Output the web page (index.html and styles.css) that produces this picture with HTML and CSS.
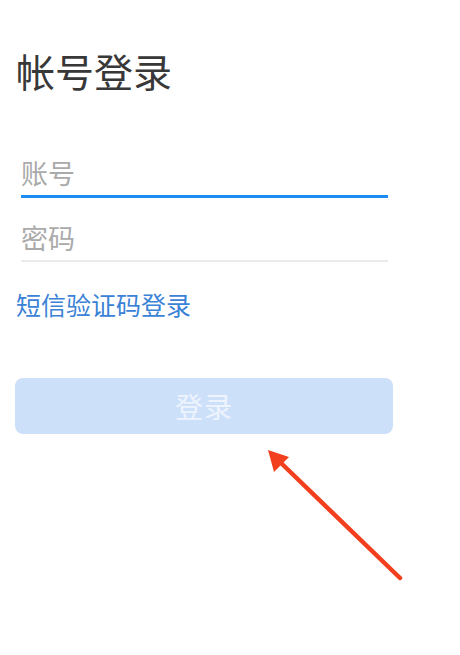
FILE: index.html
```html
<!DOCTYPE html>
<html lang="zh">
<head>
<meta charset="utf-8">
<title>帐号登录</title>
<link rel="stylesheet" href="styles.css">
</head>
<body>
<div class="page">
  <h1 class="title">帐号登录</h1>
  <form class="form">
    <div class="field field-active">
      <input class="input" type="text" placeholder="账号">
    </div>
    <div class="field">
      <input class="input" type="password" placeholder="密码">
    </div>
    <a class="sms-link" href="#">短信验证码登录</a>
    <button class="submit" type="button" disabled>登录</button>
  </form>
  <svg class="annotation" width="460" height="655" viewBox="0 0 460 655">
    <line x1="400" y1="578" x2="280" y2="462" stroke="#f2401f" stroke-width="4.5" stroke-linecap="round"/>
    <polygon points="268,450 289,457 274,472" fill="#f2401f"/>
  </svg>
</div>
</body>
</html>
```
FILE: styles.css
```css
* { box-sizing: border-box; }
html, body {
  margin: 0;
  padding: 0;
  background: #ffffff;
}
body {
  font-family: "Noto Sans CJK SC", "Noto Sans", sans-serif;
  width: 460px;
  height: 655px;
  overflow: hidden;
}
.page {
  position: relative;
  width: 460px;
  height: 655px;
  padding: 0 72px 0 16px;
}
.title {
  margin: 0;
  padding-top: 44px;
  font-size: 39px;
  line-height: 52px;
  font-weight: 400;
  color: #383838;
  letter-spacing: 0;
}
.form {
  display: flex;
  flex-direction: column;
  margin-top: 45px;
}
.field {
  margin-left: 5px;
  border-bottom: 2px solid #ebebeb;
  height: 56px;
  display: flex;
  align-items: flex-end;
}
.field-active {
  border-bottom: 3px solid #1a8cf2;
  height: 57px;
}
.field + .field { margin-top: 8px; }
.input {
  border: 0;
  outline: none;
  padding: 0 0 3px 0;
  width: 100%;
  font-family: inherit;
  font-size: 27px;
  line-height: 38px;
  color: #333;
  background: transparent;
}
.input::placeholder { color: #aaaaaa; }
.sms-link {
  margin-top: 24px;
  font-size: 25px;
  line-height: 36px;
  color: #3a82d6;
  text-decoration: none;
  align-self: flex-start;
}
.submit {
  margin-top: 56px;
  width: 378px;
  margin-left: -1px;
  height: 56px;
  border: 0;
  border-radius: 8px;
  background: #cde0fa;
  color: #eef4fd;
  font-family: inherit;
  font-size: 28px;
  letter-spacing: 1px;
}
.annotation {
  position: absolute;
  left: 0;
  top: 0;
  pointer-events: none;
}
```
